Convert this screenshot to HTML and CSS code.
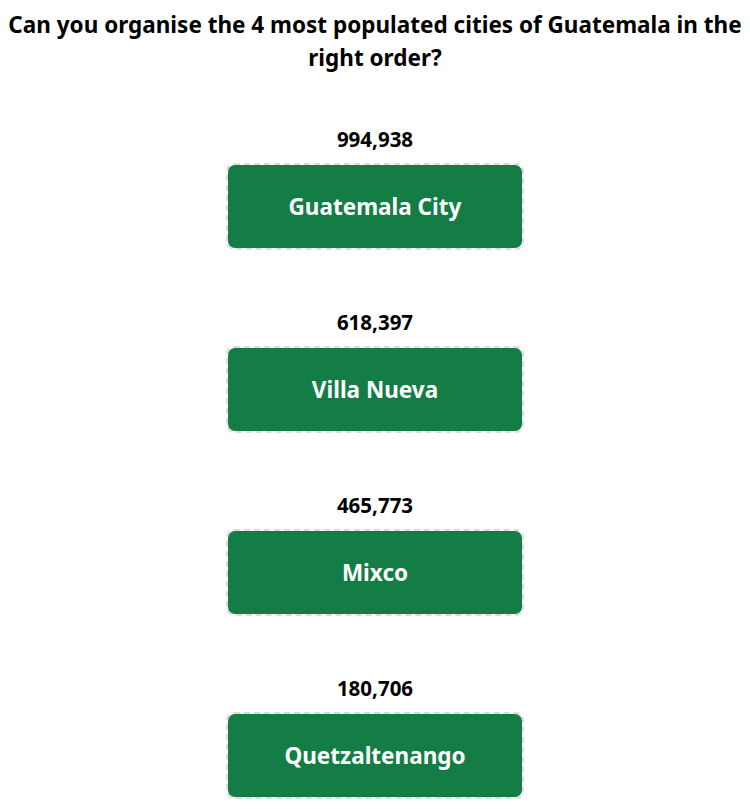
FILE: index.html
```html
<!DOCTYPE html>
<html lang="en">
<head>
  <meta charset="UTF-8">
  <meta name="viewport" content="width=device-width, initial-scale=1.0">
  <title>Guatemala Cities Quiz</title>
  <link rel="stylesheet" href="styles.css">
</head>
<body>
  <!-- Question -->
  <h1 class="question">Can you organise the 4 most populated cities of Guatemala in the right order?</h1>

  <!-- Answer list -->
  <div class="city-list">
    <div class="city-item">
      <div class="population">994,938</div>
      <div class="city-slot">
        <div class="city-card">Guatemala City</div>
      </div>
    </div>
    <div class="city-item">
      <div class="population">618,397</div>
      <div class="city-slot">
        <div class="city-card">Villa Nueva</div>
      </div>
    </div>
    <div class="city-item">
      <div class="population">465,773</div>
      <div class="city-slot">
        <div class="city-card">Mixco</div>
      </div>
    </div>
    <div class="city-item">
      <div class="population">180,706</div>
      <div class="city-slot">
        <div class="city-card">Quetzaltenango</div>
      </div>
    </div>
  </div>
</body>
</html>
```

FILE: styles.css
```css
/* General Styles */
body {
  font-family: "Noto Sans", "Open Sans", sans-serif;
  margin: 8px;
  background-color: #fff;
  color: #000;
}

.question {
  margin: 0;
  font-size: 22.5px;
  line-height: 33px;
  font-weight: bold;
  text-align: center;
}

/* City list */
.city-list {
  display: flex;
  flex-direction: column;
  align-items: center;
  margin-top: 53px;
  gap: 60px;
}

.city-item {
  display: flex;
  flex-direction: column;
  align-items: center;
  gap: 12px;
}

.population {
  font-size: 20.5px;
  line-height: 24px;
  font-weight: bold;
}

.city-slot {
  border: 2px dashed #dcdcdc;
  border-radius: 8px;
}

.city-card {
  width: 294px;
  height: 83px;
  display: flex;
  align-items: center;
  justify-content: center;
  background-color: #137d45;
  color: #fff;
  font-size: 22.5px;
  font-weight: bold;
  border-radius: 7px;
}
```
